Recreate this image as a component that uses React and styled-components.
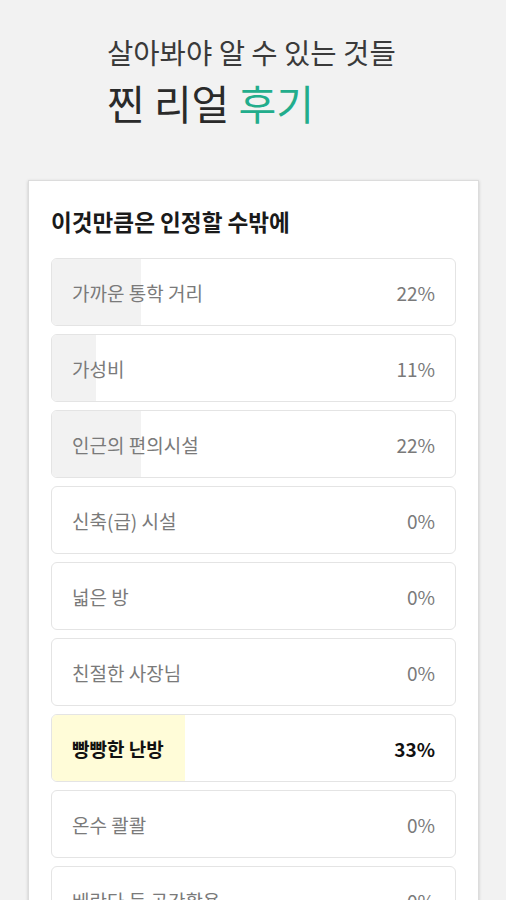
import React from 'react';
import styled, { createGlobalStyle } from 'styled-components';

const GlobalStyle = createGlobalStyle`
  html, body {
    margin: 0;
    padding: 0;
    background: #f2f2f2;
    font-family: "Noto Sans CJK KR", "Noto Sans", sans-serif;
  }
`;

const Page = styled.div`
  width: 506px;
  height: 900px;
  overflow: hidden;
  background: #f2f2f2;
`;

const Header = styled.div`
  padding: 30px 0 0 107px;
  height: 150px;
  box-sizing: border-box;
`;

const SubTitle = styled.div`
  font-size: 28.6px;
  line-height: 44px;
  font-weight: 400;
  color: #3a3a3a;
`;

const MainTitle = styled.div`
  font-size: 41px;
  line-height: 56px;
  font-weight: 400;
  color: #2a2a2a;
`;

const Accent = styled.span`
  color: #22ad8c;
`;

const Card = styled.div`
  margin: 30px 27px 0 28px;
  background: #fff;
  border: 1px solid #dcdcdc;
  box-shadow: 0 1px 3px rgba(0, 0, 0, 0.18);
  padding: 26px 22px 0 22px;
  min-height: 760px;
`;

const CardTitle = styled.div`
  font-size: 22.6px;
  font-weight: 700;
  color: #1a1a1a;
  line-height: 30px;
  margin-bottom: 21px;
`;

const List = styled.div`
  display: flex;
  flex-direction: column;
  gap: 8px;
`;

const Row = styled.div`
  position: relative;
  height: 68px;
  border: 1px solid #e4e4e4;
  border-radius: 6px;
  overflow: hidden;
  box-sizing: border-box;
`;

const Fill = styled.div`
  position: absolute;
  left: 0;
  top: 0;
  bottom: 0;
  background: ${p => (p.$top ? '#fffcd8' : '#f2f2f2')};
`;

const RowContent = styled.div`
  position: relative;
  height: 100%;
  display: flex;
  align-items: center;
  justify-content: space-between;
  padding: 0 20px 0 20px;
  font-size: 19px;
  color: ${p => (p.$top ? '#111' : '#7a7a7a')};
  font-weight: ${p => (p.$top ? 700 : 400)};
`;

const items = [
  { label: '가까운 통학 거리', pct: 22 },
  { label: '가성비', pct: 11 },
  { label: '인근의 편의시설', pct: 22 },
  { label: '신축(급) 시설', pct: 0 },
  { label: '넓은 방', pct: 0 },
  { label: '친절한 사장님', pct: 0 },
  { label: '빵빵한 난방', pct: 33, top: true },
  { label: '온수 콸콸', pct: 0 },
  { label: '베란다 등 공간활용', pct: 0 },
];

export default function App() {
  return (
    <Page>
      <GlobalStyle />
      <Header>
        <SubTitle>살아봐야 알 수 있는 것들</SubTitle>
        <MainTitle>
          찐 리얼 <Accent>후기</Accent>
        </MainTitle>
      </Header>
      <Card>
        <CardTitle>이것만큼은 인정할 수밖에</CardTitle>
        <List>
          {items.map(it => (
            <Row key={it.label}>
              {it.pct > 0 && <Fill $top={it.top} style={{ width: `${it.pct}%` }} />}
              <RowContent $top={it.top}>
                <span>{it.label}</span>
                <span>{it.pct}%</span>
              </RowContent>
            </Row>
          ))}
        </List>
      </Card>
    </Page>
  );
}
